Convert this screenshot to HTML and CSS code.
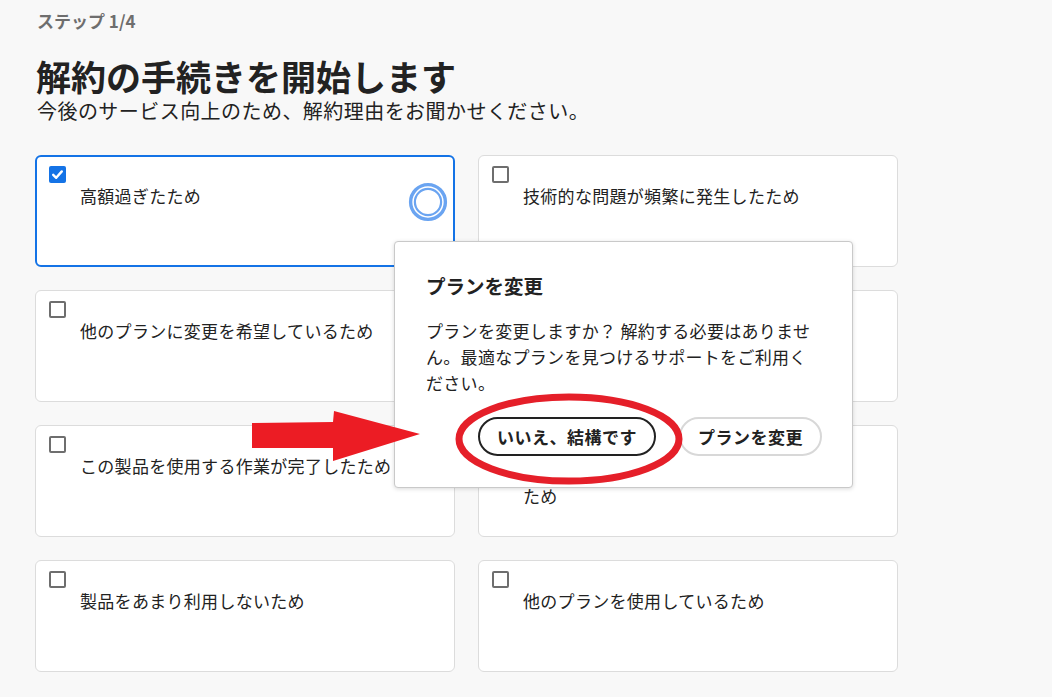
FILE: index.html
```html
<!DOCTYPE html>
<html lang="ja">
<head>
<meta charset="utf-8">
<title>解約の手続きを開始します</title>
<link rel="stylesheet" href="styles.css">
</head>
<body>
<main class="page">
  <p class="step">ステップ 1/4</p>
  <h1 class="title">解約の手続きを開始します</h1>
  <p class="subtitle">今後のサービス向上のため、解約理由をお聞かせください。</p>

  <div class="reasons">
    <div class="card card-selected">
      <span class="checkbox checkbox-checked">
        <svg viewBox="0 0 17 17" width="17" height="17"><path d="M4.2 8.8 L7.2 11.8 L12.8 5.4" fill="none" stroke="#fff" stroke-width="2.4" stroke-linecap="round" stroke-linejoin="round"/></svg>
      </span>
      <p class="label">高額過ぎたため</p>
    </div>
    <div class="card">
      <span class="checkbox"></span>
      <p class="label">技術的な問題が頻繁に発生したため</p>
    </div>
    <div class="card">
      <span class="checkbox"></span>
      <p class="label">他のプランに変更を希望しているため</p>
    </div>
    <div class="card">
      <span class="checkbox"></span>
      <p class="label">他社の製品に乗り換えたため</p>
    </div>
    <div class="card">
      <span class="checkbox"></span>
      <p class="label">この製品を使用する作業が完了したため</p>
    </div>
    <div class="card">
      <span class="checkbox"></span>
      <p class="label">必要な機能がこの製品になかった<br>ため</p>
    </div>
    <div class="card">
      <span class="checkbox"></span>
      <p class="label">製品をあまり利用しないため</p>
    </div>
    <div class="card">
      <span class="checkbox"></span>
      <p class="label">他のプランを使用しているため</p>
    </div>
  </div>

  <section class="popover">
    <h2 class="popover-title">プランを変更</h2>
    <p class="popover-body">プランを変更しますか？ 解約する必要はありません。最適なプランを見つけるサポートをご利用ください。</p>
    <div class="popover-actions">
      <button class="btn btn-dark">いいえ、結構です</button>
      <button class="btn btn-light">プランを変更</button>
    </div>
  </section>

  <svg class="annotations" width="1052" height="697" viewBox="0 0 1052 697">
    <circle cx="428" cy="202" r="17.4" fill="none" stroke="#6aa4f1" stroke-width="3.4"/>
    <circle cx="428" cy="202" r="13.1" fill="none" stroke="#6aa4f1" stroke-width="2.2"/>
    <polygon points="252,423 333,422 334,411 420,434 333,461 333,448 252,448" fill="#ec1c24"/>
    <ellipse cx="569" cy="439" rx="110" ry="42" fill="none" stroke="#e51f29" stroke-width="7"/>
  </svg>
</main>
</body>
</html>
```

FILE: styles.css
```css
* {
  box-sizing: border-box;
}

html, body {
  margin: 0;
  padding: 0;
  background: #f8f8f8;
}

body {
  font-family: "Noto Sans CJK JP", "Noto Sans", sans-serif;
  color: #222222;
}

.page {
  position: relative;
  width: 1052px;
  height: 697px;
  padding: 11px 0 0 35px;
  overflow: hidden;
}

.step {
  margin: 0;
  padding-left: 2px;
  font-size: 17px;
  line-height: 20px;
  font-weight: 700;
  color: #6e6e6e;
}

.title {
  margin: 25px 0 0;
  padding-left: 1px;
  font-size: 35px;
  line-height: 40px;
  font-weight: 700;
  color: #222222;
}

.subtitle {
  margin: 2px 0 0;
  padding-left: 2px;
  font-size: 20px;
  line-height: 26px;
  letter-spacing: 0.45px;
  color: #222222;
}

.reasons {
  display: grid;
  grid-template-columns: 420px 420px;
  grid-auto-rows: 112px;
  column-gap: 23px;
  row-gap: 23px;
  margin-top: 31px;
}

.card {
  position: relative;
  background: #ffffff;
  border: 1px solid #dcdcdc;
  border-radius: 6px;
  padding: 10px 14px 0 13px;
}

.card-selected {
  border: 2px solid #1473e6;
  padding: 9px 14px 0 12px;
}

.checkbox {
  display: block;
  width: 17px;
  height: 17px;
  border: 2px solid #6e6e6e;
  border-radius: 2px;
  background: #ffffff;
}

.checkbox-checked {
  border: none;
  background: #1473e6;
}

.checkbox-checked svg {
  display: block;
}

.label {
  margin: -2px 0 0 31px;
  font-size: 17px;
  line-height: 30px;
  letter-spacing: 0.3px;
  color: #222222;
}

.popover {
  position: absolute;
  left: 394px;
  top: 241px;
  width: 459px;
  height: 247px;
  background: #ffffff;
  border: 1px solid #c9c9c9;
  border-radius: 4px;
  box-shadow: 0 1px 4px rgba(0, 0, 0, 0.15);
  padding: 31px 30px 0 31px;
}

.popover-title {
  margin: 0;
  font-size: 19.5px;
  line-height: 26px;
  font-weight: 700;
  color: #222222;
}

.popover-body {
  margin: 19px 0 0;
  padding-right: 1px;
  font-size: 17px;
  line-height: 26px;
  letter-spacing: 0.3px;
  color: #222222;
}

.popover-actions {
  display: flex;
  justify-content: flex-end;
  gap: 23px;
  margin-top: 21px;
}

.btn {
  height: 39px;
  border-radius: 20px;
  background: #ffffff;
  font-family: "Noto Sans CJK JP", "Noto Sans", sans-serif;
  font-size: 17px;
  font-weight: 700;
  letter-spacing: 0.5px;
  color: #222222;
  padding: 0 17px;
  line-height: 35px;
}

.btn-dark {
  border: 2px solid #222222;
}

.btn-light {
  border: 2px solid #d8d8d8;
}

.annotations {
  position: absolute;
  left: 0;
  top: 0;
  pointer-events: none;
}
```
